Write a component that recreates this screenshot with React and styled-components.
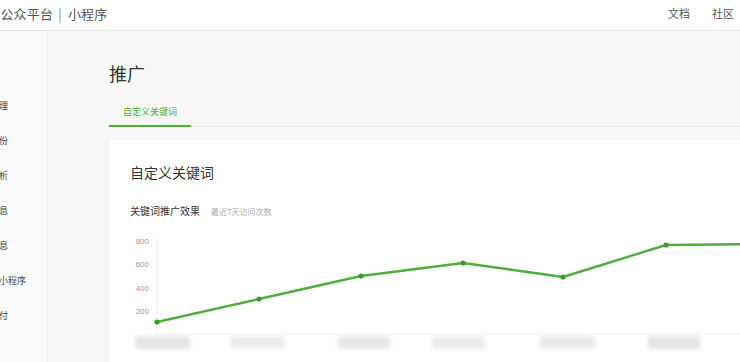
import React from "react";
import styled, { createGlobalStyle } from "styled-components";

const GREEN = "#4fae3c";

const Global = createGlobalStyle`
  html, body { margin: 0; padding: 0; }
  body {
    background: #f7f7f8;
    font-family: "Noto Sans CJK SC", "Noto Sans", sans-serif;
    overflow: hidden;
  }
`;

const Page = styled.div`
  width: 740px;
  height: 362px;
  overflow: hidden;
  display: flex;
  flex-direction: column;
`;

const Header = styled.header`
  height: 30px;
  flex: none;
  background: #fff;
  border-bottom: 1px solid #e8e8e8;
  display: flex;
  align-items: center;
  justify-content: space-between;
`;

const Brand = styled.div`
  margin-left: -26px;
  font-size: 13px;
  color: #555;
  white-space: nowrap;
  letter-spacing: 0.2px;
  margin-top: -4px;
`;

const Sep = styled.span`
  margin: 0 6px 0 5px;
  color: #888;
`;

const TopNav = styled.nav`
  display: flex;
  gap: 22px;
  padding-right: 6px;
  margin-top: -4px;
`;

const TopLink = styled.a`
  font-size: 11px;
  color: #555;
  text-decoration: none;
`;

const Body = styled.div`
  flex: 1;
  display: flex;
  min-height: 0;
`;

const Sidebar = styled.aside`
  width: 47px;
  flex: none;
  border-right: 1px solid #ececec;
  background: #f9f9f9;
  overflow: hidden;
`;

const SideList = styled.ul`
  list-style: none;
  margin: 0;
  padding: 68px 0 0;
  margin-left: -28px;
  display: flex;
  flex-direction: column;
  gap: 22px;
`;

const SideItem = styled.li`
  font-size: 9px;
  line-height: 13px;
  color: #444;
  white-space: nowrap;
`;

const Main = styled.main`
  flex: 1;
  min-width: 0;
  padding-left: 61px;
  display: flex;
  flex-direction: column;
`;

const Title = styled.h1`
  margin: 29px 0 0;
  font-size: 18px;
  font-weight: 400;
  line-height: 26px;
  color: #333;
`;

const Tabs = styled.div`
  margin-top: 19px;
  display: flex;
  border-bottom: 1px solid #ebebeb;
`;

const Tab = styled.div`
  padding: 0 14px 7px;
  font-size: 9px;
  line-height: 13px;
  color: ${(p) => (p.active ? GREEN : "#666")};
  border-bottom: 2px solid ${(p) => (p.active ? GREEN : "transparent")};
  margin-bottom: -1px;
`;

const Card = styled.section`
  margin-top: 13px;
  margin-left: 1px;
  flex: 1;
  background: #fff;
  padding: 22px 0 0 20px;
`;

const CardTitle = styled.h2`
  margin: 0;
  font-size: 14px;
  font-weight: 400;
  line-height: 20px;
  color: #353535;
`;

const ChartHead = styled.div`
  margin-top: 21px;
  display: flex;
  align-items: baseline;
  gap: 11px;
`;

const ChartTitle = styled.span`
  font-size: 10px;
  color: #333;
`;

const ChartSub = styled.span`
  font-size: 8px;
  color: #aaa;
`;

const Chart = styled.svg`
  display: block;
  margin-top: 15px;
  overflow: visible;
`;

const pts = [
  [27, 89],
  [129, 66],
  [231, 43],
  [333, 30],
  [433, 44],
  [536, 12],
  [638, 11],
];

const yTicks = [
  ["800", 8],
  ["600", 31],
  ["400", 55],
  ["200", 78],
];

const xLabels = [
  [5, 55, "#e4e4e4"],
  [100, 55, "#ececec"],
  [208, 52, "#e6e6e6"],
  [302, 53, "#ebebeb"],
  [410, 55, "#e9e9e9"],
  [518, 52, "#e4e4e4"],
];

function LineChart() {
  const d = pts.map((p, i) => (i ? "L" : "M") + p[0] + " " + p[1]).join(" ");
  return (
    <Chart width="610" height="120" viewBox="0 0 610 120">
      <defs>
        <filter id="blur" x="-20%" y="-50%" width="140%" height="200%">
          <feGaussianBlur stdDeviation="2" />
        </filter>
      </defs>
      <line x1="27" y1="4" x2="27" y2="101" stroke="#eeeeee" strokeWidth="1" />
      <line x1="27" y1="101" x2="610" y2="101" stroke="#f1f1f1" strokeWidth="1" />
      {yTicks.map(([t, y]) => (
        <text
          key={t}
          x="19"
          y={y + 3}
          textAnchor="end"
          fontSize="8"
          fill="#999"
          fontFamily="Liberation Sans, sans-serif"
        >
          {t}
        </text>
      ))}
      <path d={d} fill="none" stroke={GREEN} strokeWidth="2.4" strokeLinejoin="round" />
      {pts.map(([x, y], i) => (
        <circle key={i} cx={x} cy={y} r="2.6" fill="#3f9a2f" />
      ))}
      {xLabels.map(([x, w, c], i) => (
        <rect key={i} x={x} y="103" width={w} height="13" fill={c} filter="url(#blur)" />
      ))}
    </Chart>
  );
}

export default function App() {
  return (
    <Page>
      <Global />
      <Header>
        <Brand>
          微信公众平台<Sep>|</Sep>小程序
        </Brand>
        <TopNav>
          <TopLink href="#">文档</TopLink>
          <TopLink href="#">社区</TopLink>
        </TopNav>
      </Header>
      <Body>
        <Sidebar>
          <SideList>
            <SideItem>开发管理</SideItem>
            <SideItem>用户身份</SideItem>
            <SideItem>数据分析</SideItem>
            <SideItem>模板消息</SideItem>
            <SideItem>客服消息</SideItem>
            <SideItem>附近的小程序</SideItem>
            <SideItem>微信支付</SideItem>
          </SideList>
        </Sidebar>
        <Main>
          <Title>推广</Title>
          <Tabs>
            <Tab active>自定义关键词</Tab>
          </Tabs>
          <Card>
            <CardTitle>自定义关键词</CardTitle>
            <ChartHead>
              <ChartTitle>关键词推广效果</ChartTitle>
              <ChartSub>最近7天访问次数</ChartSub>
            </ChartHead>
            <LineChart />
          </Card>
        </Main>
      </Body>
    </Page>
  );
}
